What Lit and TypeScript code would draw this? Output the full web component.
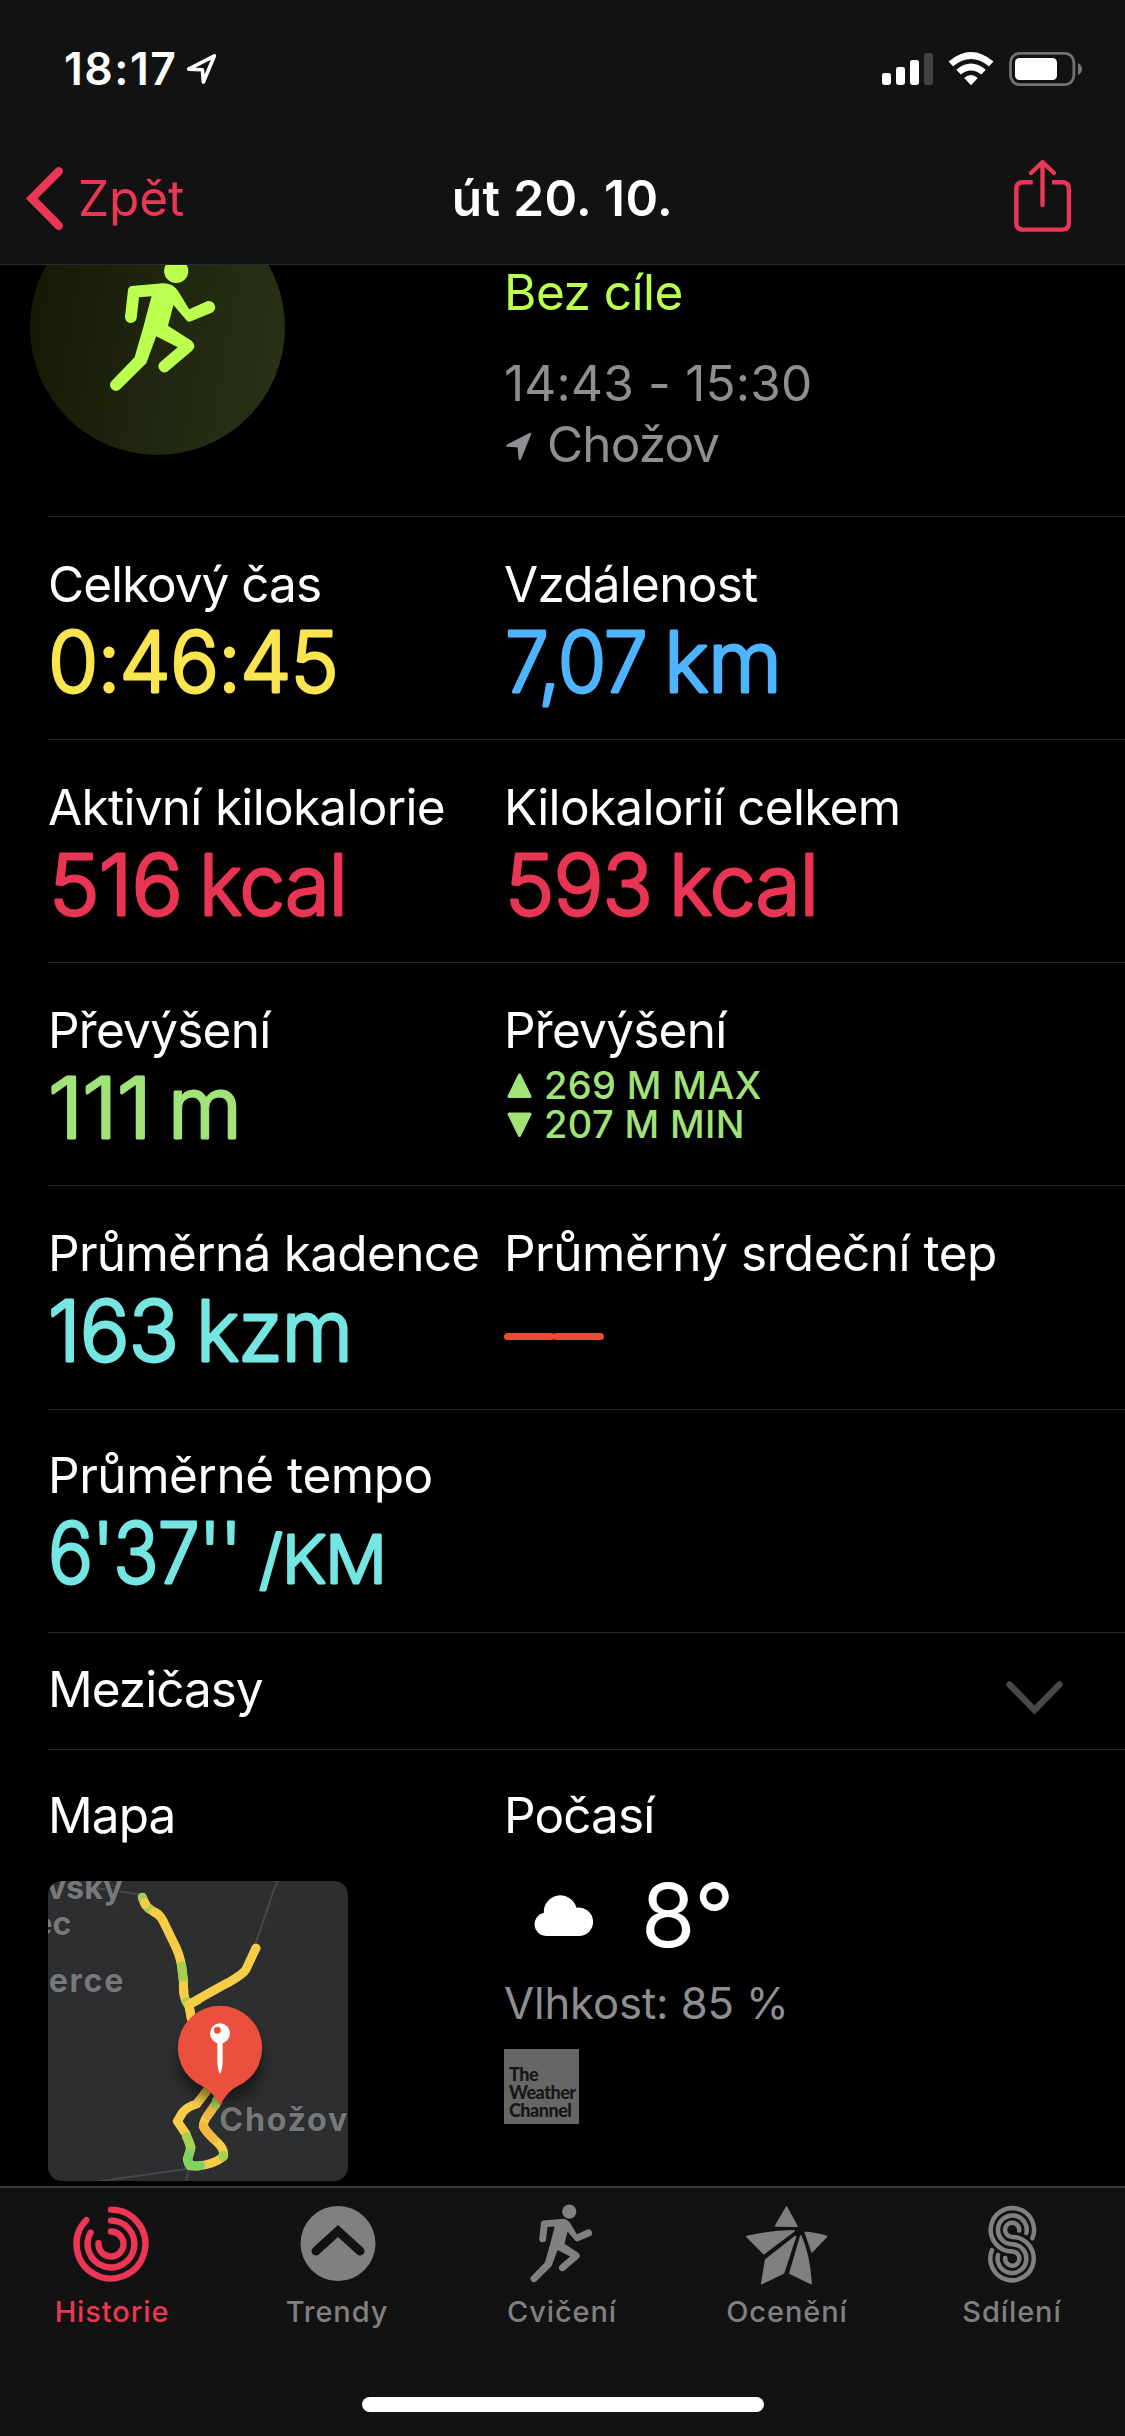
import { LitElement, html, css, svg, type TemplateResult } from "lit";
import { customElement, property } from "lit/decorators.js";
import { classMap } from "lit/directives/class-map.js";
import { styleMap } from "lit/directives/style-map.js";

interface ValuePart { text: string; x: number; length: number; small?: boolean; }
interface Metric { label: string; tracking?: number; tone?: string; parts?: ValuePart[]; kind?: "range" | "empty"; }

const runner = svg`
  <circle cx="176.2" cy="271" r="12.1"></circle>
  <path d="M132 286 L162.5 283.3 Q173 282.8 178.5 291.7 L189.2 309.3 L207 301.3 A6.3 6.3 0 0 1 212.3 312.6 L191 321.3 Q188 322.6 186 319.8 L173.4 305 L168 325.7 L191.5 340.7 Q197 345.8 192 350.7 L167.5 371.5 A6 6 0 0 1 159.8 362.6 L177.7 347.3 L156.2 336.3 L146.3 363.2 L119.6 389.6 A5.9 5.9 0 0 1 111.4 381.2 L134.6 357.3 L143 328.3 L151.5 296.3 L139 297.3 L136.8 317.5 A5.9 5.9 0 0 1 125 316.6 L128 290 Q128.5 286.3 132 286 Z"></path>`;

const tabIcons: Record<string, TemplateResult> = {
  rings: html`<svg class="icon" viewBox="-40 -40 80 80" fill="none" stroke="currentColor" stroke-width="6.4" stroke-linecap="round">
    <path d="M0 -34.4 A34.4 34.4 0 1 1 -24.8 -23.9"></path>
    <path d="M0 -23.4 A23.4 23.4 0 1 1 -20.4 -11.5"></path>
    <path d="M0 -12.5 A12.5 12.5 0 1 1 -12.5 -0.8"></path></svg>`,
  trend: html`<svg class="icon" viewBox="-40 -40 80 80"><circle cy="-.5" r="37.5" fill="currentColor"></circle>
    <path d="M-22 7 L0 -13 L22 7" fill="none" stroke="#121212" stroke-width="9" stroke-linecap="round"></path></svg>`,
  runner: html`<svg class="icon" viewBox="99 258 128 136" preserveAspectRatio="none" fill="currentColor">${runner}</svg>`,
  star: html`<svg class="icon" viewBox="747.5 2204 80 80" fill="currentColor" stroke="currentColor" stroke-width="1.6" stroke-linejoin="round">
    <path d="M786 2207.2 L796.4 2226.2 L775.2 2226Z"></path>
    <path d="M746.5 2236.6 Q770 2231 793.5 2230.8 L763.4 2253.6Z"></path>
    <path d="M795 2236.5 L783 2273 L761.2 2283.6 L765.2 2260Z"></path>
    <path d="M800.4 2236 Q809 2256 810.6 2283.6 L789.4 2273.2Z"></path>
    <path d="M804.8 2232.4 Q817 2233.6 826 2236.5 L811.5 2251.8Z"></path></svg>`,
  sharing: html`<svg class="icon" viewBox="972.8 2204 80 80" fill="none" stroke="currentColor" stroke-width="4.5" stroke-linecap="round">
    <path d="M1032.2 2238.2 A21.7 21.7 0 1 0 1012 2251.5 A7.1 7.1 0 1 1 1005 2258"></path>
    <path d="M1026.2 2233 A14.4 14.4 0 1 0 1012 2244.2 A14.4 14.4 0 1 1 997.8 2255"></path>
    <path d="M1019 2230.5 A7.1 7.1 0 1 0 1012 2236.9 A21.7 21.7 0 1 1 991.8 2250.2"></path></svg>`,
};

@customElement("status-header")
class StatusHeader extends LitElement {
  static styles = css`
    :host { display: block; box-sizing: border-box; height: 265px; background: #121212; border-bottom: 1px solid #2b2b2c; padding-top: 42px; position: relative; z-index: 1; }
    svg { display: block; overflow: visible; }
    .status { display: flex; align-items: center; height: 54px; padding: 0 40px 0 64px; color: #fff; }
    .clock { font-size: 44.5px; font-weight: 600; line-height: 54px; letter-spacing: 1.5px; width: 120px; }
    .grow { flex: 1; }
    .nav { display: grid; grid-template-columns: 1fr auto 1fr; padding: 72px 26px 0 26px; line-height: 60px; font-size: 49.5px; }
    .back { display: flex; gap: 15px; color: #eb3655; letter-spacing: -.1px; }
    .title { color: #fff; font-weight: 600; letter-spacing: .4px; }
    .share { justify-self: end; margin-right: 28px; color: #eb3655; }
  `;
  render() {
    return html`
      <div class="status">
        <span class="clock">18:17</span>
        <svg width="36" height="54" viewBox="184 42 36 54"><path d="M188.6 69.2 L214.4 55.9 L203.4 82 L202.4 69.8Z" fill="none" stroke="#fff" stroke-width="3.6" stroke-linejoin="round"></path></svg>
        <span class="grow"></span>
        <svg width="205" height="54" viewBox="880 42 205 54" fill="#fff">
          <rect x="882" y="73" width="9" height="12" rx="2.4"></rect>
          <rect x="896" y="67" width="9" height="18" rx="2.4"></rect>
          <rect x="910" y="60" width="9" height="25" rx="2.4"></rect>
          <rect x="924" y="53" width="9" height="32" rx="2.4" fill="#424242"></rect>
          <path d="M948.6 61.5 Q971 42.5 993.5 61.5 L989 66.3 Q971 51.5 953 66.3Z M956.3 69.8 Q971 57.2 985.8 69.8 L981.2 74.6 Q971 66.3 960.8 74.6Z M964.2 78 Q971 72 977.8 78 L971 85.3Z"></path>
          <rect x="1010.5" y="53.4" width="63.4" height="31.2" rx="9" fill="none" stroke="#727272" stroke-width="2.8"></rect>
          <rect x="1015" y="58" width="42" height="22" rx="4.5"></rect>
          <path d="M1078 63 Q1082 65 1082 69 Q1082 73 1078 75Z" fill="#777"></path>
        </svg>
      </div>
      <div class="nav">
        <div class="back">
          <svg width="37" height="60" viewBox="26 168 37 60"><path d="M58.8 171.2 L31.8 198.4 L58.8 225.8" fill="none" stroke="currentColor" stroke-width="8.4" stroke-linecap="round"></path></svg>
          <span>Zpět</span>
        </div>
        <div class="title">út 20. 10.</div>
        <svg class="share" width="57" height="60" viewBox="1014 168 57 60" fill="none" stroke="currentColor" stroke-width="4.4">
          <path d="M1032.8 182.3 H1023 Q1016.3 182.3 1016.3 189 V223 Q1016.3 229.6 1023 229.6 H1062 Q1068.9 229.6 1068.9 223 V189 Q1068.9 182.3 1062 182.3 H1052"></path>
          <path d="M1042.5 163 V205 M1031 173 L1042.5 162 L1054 173" stroke-linecap="round" stroke-linejoin="round"></path>
        </svg>
      </div>`;
  }
}

@customElement("metric-cell")
class MetricCell extends LitElement {
  @property({ attribute: false }) metric!: Metric;
  static styles = css`
    :host { display: block; min-width: 0; }
    .label { color: #fff; font-size: 49.5px; line-height: 60px; white-space: nowrap; }
    svg { display: block; overflow: visible; }
    .value { font-size: 84px; font-weight: 300; fill: currentColor; stroke: currentColor; stroke-width: 2.8px; stroke-linejoin: round; white-space: pre; }
    .small { font-size: 66px; }
    .yellow { color: #fae550; } .blue { color: #4db5ff; } .red { color: #e93554; }
    .green { color: #a1e379; } .cyan { color: #75e6e2; } .orange { color: #eb4b2e; }
    .range { display: flex; flex-direction: column; padding: 6px 0 0 3px; font-size: 38px; font-weight: 450; line-height: 39px; }
    .line { display: flex; align-items: center; gap: 12px; letter-spacing: .35px; }
  `;
  private body(m: Metric) {
    if (m.kind === "range") {
      return html`<div class="range green">
        <div class="line"><svg width="25" height="39" viewBox="0 0 25 39"><path d="M12.5 9 L23 30.5 H2Z" fill="currentColor" stroke="currentColor" stroke-width="3" stroke-linejoin="round"></path></svg><span>269 M MAX</span></div>
        <div class="line"><svg width="25" height="39" viewBox="0 0 25 39"><path d="M12.5 30.5 L23 9 H2Z" fill="currentColor" stroke="currentColor" stroke-width="3" stroke-linejoin="round"></path></svg><span>207 M MIN</span></div>
      </div>`;
    }
    if (m.kind === "empty") {
      return html`<svg class="orange" width="110" height="90"><path d="M3.5 53.5 H46.5 M53.5 53.5 H96.5" stroke="currentColor" stroke-width="7" stroke-linecap="round"></path><path d="M46 53.5 H54" stroke="currentColor" stroke-width="6"></path></svg>`;
    }
    return html`<svg class=${m.tone ?? ""} width="420" height="90">${(m.parts ?? []).map(
      (p) => svg`<text class=${classMap({ value: true, small: !!p.small })} x=${p.x} y="78" textLength=${p.length} lengthAdjust="spacingAndGlyphs">${p.text}</text>`)}</svg>`;
  }
  render() {
    const m = this.metric;
    return html`<div class="label" style=${styleMap({ letterSpacing: `${m.tracking ?? -0.75}px` })}>${m.label}</div>${this.body(m)}`;
  }
}

@customElement("route-map")
class RouteMap extends LitElement {
  static styles = css`
    :host { display: block; width: 300px; height: 300px; border-radius: 14px; overflow: hidden; background: #2d2e30; }
    svg { display: block; }
    .place { font-size: 97px; font-weight: 650; fill: #77787a; stroke: #26272a; stroke-width: 5px; paint-order: stroke; letter-spacing: 0; }
    .wide { letter-spacing: 5px; }
  `;
  render() {
    return html`<svg width="300" height="300" viewBox="54 63 900 900">
      <defs><filter id="soft" x="-40%" y="-40%" width="180%" height="180%"><feGaussianBlur stdDeviation="20"></feGaussianBlur></filter></defs>
      <g fill="none" stroke="#47484b" stroke-width="6">
        <path d="M200 85 L340 105 M745 60 Q735 80 722 118 L677 250 M200 965 L475 926 L468 970"></path>
      </g>
      <g fill="none" stroke-linecap="round" stroke-linejoin="round" stroke-width="27">
        <path d="M337 112 L345 133 L358 147 L383 162 Q395 172 403 190 L432 250 Q448 280 455 318 L461 365 Q458 400 466 418 L478 440 L484 475 M476 434 Q560 385 600 365 Q640 342 648 328 L678 264 M532 690 L500 732 Q472 740 458 757 L442 784 L468 822 L483 862 L472 898 L480 917 L500 918 Q550 915 580 890 Q585 870 565 850 Q525 815 520 800 Q520 780 540 757 L562 725" stroke="#f6cd45"></path>
        <path d="M520 798 Q530 815 550 836 M533 767 L545 750" stroke="#f2b843"></path>
        <path d="M337 112 L339 118 M354 143 L362 149 M455 318 L460 365 M468 425 L470 428 M469 830 Q482 850 482 870 M580 886 L578 890 M557 735 L560 720" stroke="#a5d152"></path>
        <path d="M479 880 Q470 897 476 912 Q490 922 512 916" stroke="#80d263"></path>
        <path d="M345 128 L346 131 M372 156 L383 162 M460 376 L462 395 M476 434 L505 419 M476 434 L484 475" stroke="#f6cd45"></path>
      </g>
      <text class="place" x="50" y="117">vsky</text>
      <text class="place" x="10" y="226">ec</text>
      <text class="place wide" x="56" y="395">erce</text>
      <text class="place" x="568" y="813" textLength="384">Chožov</text>
      <ellipse cx="572" cy="608" rx="125" ry="115" fill="#000" opacity=".5" filter="url(#soft)"></ellipse>
      <circle cx="570" cy="564" r="126.5" fill="#eb4f3d"></circle>
      <path d="M622 679 Q594 692 570 736 Q546 692 518 679Z" fill="#eb4f3d"></path>
      <circle cx="570" cy="520" r="30" fill="#fff"></circle><circle cx="562" cy="511" r="10.5" fill="#eb4f3d"></circle>
      <path d="M562 545 H578 V605 Q577 630 570 642 Q563 630 562 605Z" fill="#fff"></path>
    </svg>`;
  }
}

@customElement("tab-bar")
class TabBar extends LitElement {
  static styles = css`
    :host { display: block; box-sizing: border-box; height: 250px; background: #121212; border-top: 2px solid #3a3a3b; }
    .tabs { display: grid; grid-template-columns: repeat(5, 1fr); padding-top: 16px; }
    .tab { display: flex; flex-direction: column; align-items: center; gap: 10px; color: #808080; font-size: 29px; font-weight: 500; line-height: 36px; letter-spacing: .9px; }
    .tab span { margin-right: 1px; }
    .tab.active { color: #eb3655; }
    .icon { display: block; width: 80px; height: 80px; overflow: visible; }
    .tab:nth-child(3) .icon { width: 75px; margin-right: 2px; }
    .tab:nth-child(1) .icon { margin-right: 3px; }
    .home { width: 402px; height: 15px; border-radius: 8px; background: #fff; margin: 67px auto 0; }
  `;
  private items = [
    ["rings", "Historie"], ["trend", "Trendy"], ["runner", "Cvičení"], ["star", "Ocenění"], ["sharing", "Sdílení"],
  ];
  render() {
    return html`<div class="tabs">${this.items.map(([icon, label], i) => html`
      <div class=${classMap({ tab: true, active: i === 0 })}>${tabIcons[icon]}<span>${label}</span></div>`)}</div>
      <div class="home"></div>`;
  }
}

@customElement("app-root")
class AppRoot extends LitElement {
  static styles = css`
    :host { display: flex; flex-direction: column; width: 1125px; height: 2436px; overflow: hidden; background: #000; color: #fff; font-family: Inter, "Liberation Sans", sans-serif; }
    svg { display: block; overflow: visible; }
    .content { flex: 1; min-height: 0; overflow: hidden; padding-left: 48px; font-size: 49.5px; line-height: 60px; letter-spacing: -.9px; }
    .row { display: grid; grid-template-columns: 456px 1fr; box-sizing: border-box; }
    .summary { height: 251px; }
    .badge { width: 255px; height: 255px; margin: -65px 0 0 -18px; border-radius: 50%; background: linear-gradient(100deg, #171a04 8%, #20260f 50%, #293319 100%); color: #bbff4f; }
    .about { margin-top: -3px; }
    .goal { color: #bbff4f; letter-spacing: -.5px; }
    .time { color: #8e8e93; margin-top: 31px; letter-spacing: .2px; }
    .place { display: flex; gap: 14px; margin-top: 1px; padding-left: 2px; color: #8e8e93; }
    .metrics { height: 223px; padding-top: 37px; border-top: 1px solid #2c2c2d; }
    .metrics.tall { height: 224px; }
    .metrics.last { padding-top: 35px; }
    .splits { display: flex; justify-content: space-between; box-sizing: border-box; height: 117px; padding: 26px 62px 0 0; border-top: 1px solid #2c2c2d; letter-spacing: -1px; }
    .extras { border-top: 1px solid #2c2c2d; padding-top: 35px; }
    .map { margin-top: 36px; }
    .weather { display: flex; align-items: center; margin-top: 25px; padding-left: 29px; gap: 47px; height: 90px; font-size: 88px; line-height: 90px; letter-spacing: 0; }
    .humidity { color: #8e8e93; font-size: 43.6px; line-height: 54px; margin-top: 17px; letter-spacing: -.1px; }
    .channel { box-sizing: border-box; width: 75px; height: 75px; margin-top: 18px; padding: 16px 0 0 5px; background: #666; color: #161616; font: 900 18px/18px Lato, "Liberation Sans", sans-serif; letter-spacing: -.5px; }
  `;
  private rows: Metric[][] = [
    [{ label: "Celkový čas", tracking: -1, tone: "yellow", parts: [{ text: "0:46:45", x: 0, length: 290 }] },
     { label: "Vzdálenost", tone: "blue", parts: [{ text: "7,07", x: 1, length: 142 }, { text: "km", x: 160, length: 117 }] }],
    [{ label: "Aktivní kilokalorie", tracking: -0.7, tone: "red", parts: [{ text: "516", x: 1, length: 133 }, { text: "kcal", x: 151, length: 148 }] },
     { label: "Kilokalorií celkem", tracking: -0.7, tone: "red", parts: [{ text: "593", x: 1, length: 147 }, { text: "kcal", x: 165, length: 149 }] }],
    [{ label: "Převýšení", tone: "green", parts: [{ text: "111", x: 0, length: 103 }, { text: "m", x: 120, length: 73 }] },
     { label: "Převýšení", kind: "range" }],
    [{ label: "Průměrná kadence", tracking: -0.7, tone: "cyan", parts: [{ text: "163", x: 0, length: 130 }, { text: "kzm", x: 148, length: 156 }] },
     { label: "Průměrný srdeční tep", tracking: -0.5, kind: "empty" }],
    [{ label: "Průměrné tempo", tracking: -0.45, tone: "cyan", parts: [{ text: "6'37''", x: 0, length: 193 }, { text: "/KM", x: 211, length: 127, small: true }] }],
  ];
  render() {
    return html`
      <status-header></status-header>
      <main class="content">
        <section class="row summary">
          <div class="badge"><svg width="255" height="255" viewBox="30 200 255 255" fill="currentColor">${runner}</svg></div>
          <div class="about">
            <div class="goal">Bez cíle</div>
            <div class="time">14:43 - 15:30</div>
            <div class="place"><svg width="27" height="60" viewBox="506 414 27 60"><path d="M507.5 445.6 L530 434 L519.8 459 L518.6 446.2Z" fill="currentColor" stroke="currentColor" stroke-width="2.4" stroke-linejoin="round"></path></svg><span>Chožov</span></div>
          </div>
        </section>
        ${this.rows.map((r, i) => html`<section class=${classMap({ row: true, metrics: true, tall: i === 3, last: i === 4 })}>
          ${r.map((m) => html`<metric-cell .metric=${m}></metric-cell>`)}</section>`)}
        <section class="splits"><span>Mezičasy</span>
          <svg width="57" height="60" viewBox="1006 1659 57 60"><path d="M1009.5 1684.5 L1034.5 1710 L1059.5 1684.5" fill="none" stroke="#48484a" stroke-width="6.4" stroke-linecap="round"></path></svg>
        </section>
        <section class="row extras">
          <div><div>Mapa</div><route-map class="map"></route-map></div>
          <div><div>Počasí</div>
            <div class="weather"><svg width="61" height="42" viewBox="0 0 60 42" preserveAspectRatio="none" fill="#fff"><path d="M12.5 42 A11.8 11.8 0 0 1 10.7 18.7 A16.3 16.3 0 0 1 42.8 13.8 A14.2 14.2 0 1 1 46 42Z"></path></svg><span>8°</span></div>
            <div class="humidity">Vlhkost: 85 %</div>
            <div class="channel">The<br>Weather<br>Channel</div>
          </div>
        </section>
      </main>
      <tab-bar></tab-bar>`;
  }
}
